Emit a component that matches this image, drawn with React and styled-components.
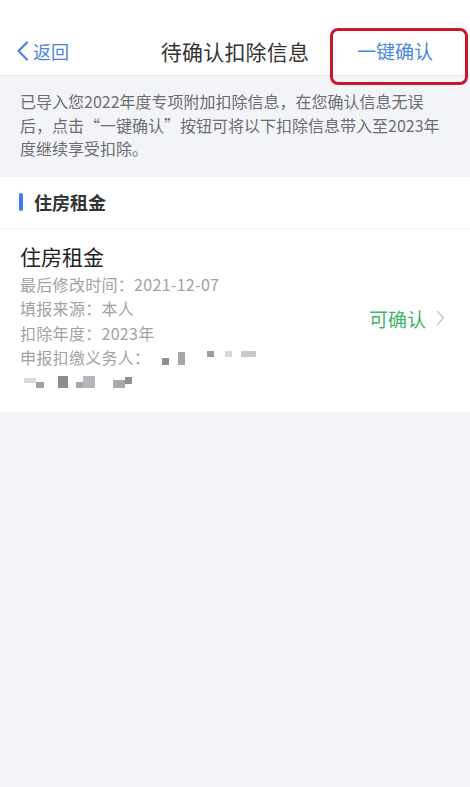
import styled, { createGlobalStyle } from 'styled-components';

const GlobalStyle = createGlobalStyle`
  html, body {
    margin: 0;
    padding: 0;
    background: #f3f4f8;
  }
  * {
    box-sizing: border-box;
  }
  body {
    font-family: "Noto Sans CJK SC", "Noto Sans", sans-serif;
  }
`;

const Page = styled.div`
  width: 470px;
  min-height: 787px;
  background: #f3f4f8;
`;

const NavBar = styled.header`
  position: relative;
  height: 76px;
  padding-top: 26px;
  background: #ffffff;
  border-bottom: 1px solid #e6e7eb;
  display: grid;
  grid-template-columns: 1fr auto 1fr;
  align-items: center;
`;

const BackButton = styled.button`
  justify-self: start;
  display: flex;
  align-items: center;
  gap: 4px;
  margin-left: 16px;
  padding: 0;
  border: none;
  background: none;
  font-family: inherit;
  font-size: 18px;
  color: #4a86e0;
`;

const NavTitle = styled.h1`
  margin: 0;
  font-size: 21px;
  font-weight: 400;
  color: #333333;
  letter-spacing: 0.2px;
`;

const ConfirmAll = styled.button`
  justify-self: end;
  margin-right: 37px;
  padding: 0;
  border: none;
  background: none;
  font-family: inherit;
  font-size: 19px;
  color: #4a86e0;
`;

const Highlight = styled.div`
  position: absolute;
  left: 330px;
  top: 28px;
  width: 138px;
  height: 57px;
  border: 3px solid #c8182c;
  border-radius: 8px;
  pointer-events: none;
`;

const Notice = styled.p`
  margin: 0;
  padding: 14px 20px 16px;
  font-size: 16px;
  line-height: 23.5px;
  color: #6b6d72;
`;

const Card = styled.section`
  background: #ffffff;
`;

const SectionHeader = styled.div`
  display: flex;
  align-items: center;
  gap: 11px;
  height: 52px;
  padding-left: 19px;
  border-bottom: 1px solid #eeeff2;
`;

const Marker = styled.span`
  width: 4px;
  height: 18px;
  border-radius: 2px;
  background: #3b7cf0;
`;

const SectionTitle = styled.h2`
  margin: 0;
  font-size: 18px;
  font-weight: 700;
  color: #333333;
`;

const Item = styled.div`
  display: flex;
  align-items: center;
  padding: 12px 25px 18px 20px;
`;

const ItemBody = styled.div`
  flex: 1;
`;

const ItemTitle = styled.div`
  font-size: 21px;
  line-height: 30px;
  color: #222222;
  margin-bottom: 1px;
`;

const Detail = styled.div`
  display: flex;
  align-items: center;
  font-size: 16px;
  line-height: 24.5px;
  color: #a0a2a6;
  letter-spacing: 0.3px;
`;

const Mosaic = styled.div`
  display: flex;
  align-items: center;
  margin-left: ${({ $offset }) => $offset || 0}px;
  height: 24.5px;
`;

const Pixel = styled.span`
  display: inline-block;
  width: ${({ $w }) => $w}px;
  height: ${({ $h }) => $h || 8}px;
  background: ${({ $c }) => $c};
  margin-top: ${({ $y }) => $y || 0}px;
`;

const Status = styled.div`
  display: flex;
  align-items: center;
  gap: 10px;
  margin-top: 2px;
  font-size: 19px;
  color: #3cb66a;
`;

function ChevronLeft() {
  return (
    <svg width="13" height="20" viewBox="0 0 13 20" fill="none">
      <path d="M11 1.5 L2.5 10 L11 18.5" stroke="#4a86e0" strokeWidth="2.2" strokeLinecap="round" strokeLinejoin="round" />
    </svg>
  );
}

function ChevronRight() {
  return (
    <svg width="9" height="16" viewBox="0 0 9 16" fill="none">
      <path d="M1.5 1.5 L7.5 8 L1.5 14.5" stroke="#c7c8cc" strokeWidth="1.4" strokeLinecap="round" strokeLinejoin="round" />
    </svg>
  );
}

const rowOne = [
  { w: 7, h: 7, c: '#8e9096', y: 8, g: 9 },
  { w: 7, h: 13, c: '#a5a7ad', y: 2, g: 22 },
  { w: 7, h: 6, c: '#9c9ea4', y: -6, g: 11 },
  { w: 7, h: 6, c: '#d6d7db', y: -6, g: 9 },
  { w: 15, h: 6, c: '#c8c9ce', y: -6, g: 0 },
];

const rowTwo = [
  { w: 12, h: 5, c: '#d8d9dd', y: -2, g: 0 },
  { w: 8, h: 6, c: '#9ea0a6', y: 6, g: 14 },
  { w: 10, h: 12, c: '#8b8d93', y: 0, g: 8 },
  { w: 7, h: 6, c: '#a4a6ac', y: 6, g: 0 },
  { w: 12, h: 12, c: '#b4b6bb', y: 0, g: 18 },
  { w: 12, h: 8, c: '#a6a8ae', y: 4, g: 0 },
  { w: 7, h: 7, c: '#8f9197', y: -3, g: 0 },
];

function renderPixels(list) {
  return list.map((p, i) => (
    <Pixel key={i} $w={p.w} $h={p.h} $c={p.c} $y={p.y} style={{ marginRight: p.g }} />
  ));
}

export default function App() {
  return (
    <>
      <GlobalStyle />
      <Page>
        <NavBar>
          <BackButton type="button">
            <ChevronLeft />
            返回
          </BackButton>
          <NavTitle>待确认扣除信息</NavTitle>
          <ConfirmAll type="button">一键确认</ConfirmAll>
          <Highlight />
        </NavBar>

        <Notice>
          已导入您2022年度专项附加扣除信息，在您确认信息无误后，点击“一键确认”按钮可将以下扣除信息带入至2023年度继续享受扣除。
        </Notice>

        <Card>
          <SectionHeader>
            <Marker />
            <SectionTitle>住房租金</SectionTitle>
          </SectionHeader>
          <Item>
            <ItemBody>
              <ItemTitle>住房租金</ItemTitle>
              <Detail>最后修改时间：2021-12-07</Detail>
              <Detail>填报来源：本人</Detail>
              <Detail>扣除年度：2023年</Detail>
              <Detail>
                申报扣缴义务人：
                <Mosaic $offset={12}>{renderPixels(rowOne)}</Mosaic>
              </Detail>
              <Mosaic $offset={4}>{renderPixels(rowTwo)}</Mosaic>
            </ItemBody>
            <Status>
              可确认
              <ChevronRight />
            </Status>
          </Item>
        </Card>
      </Page>
    </>
  );
}
